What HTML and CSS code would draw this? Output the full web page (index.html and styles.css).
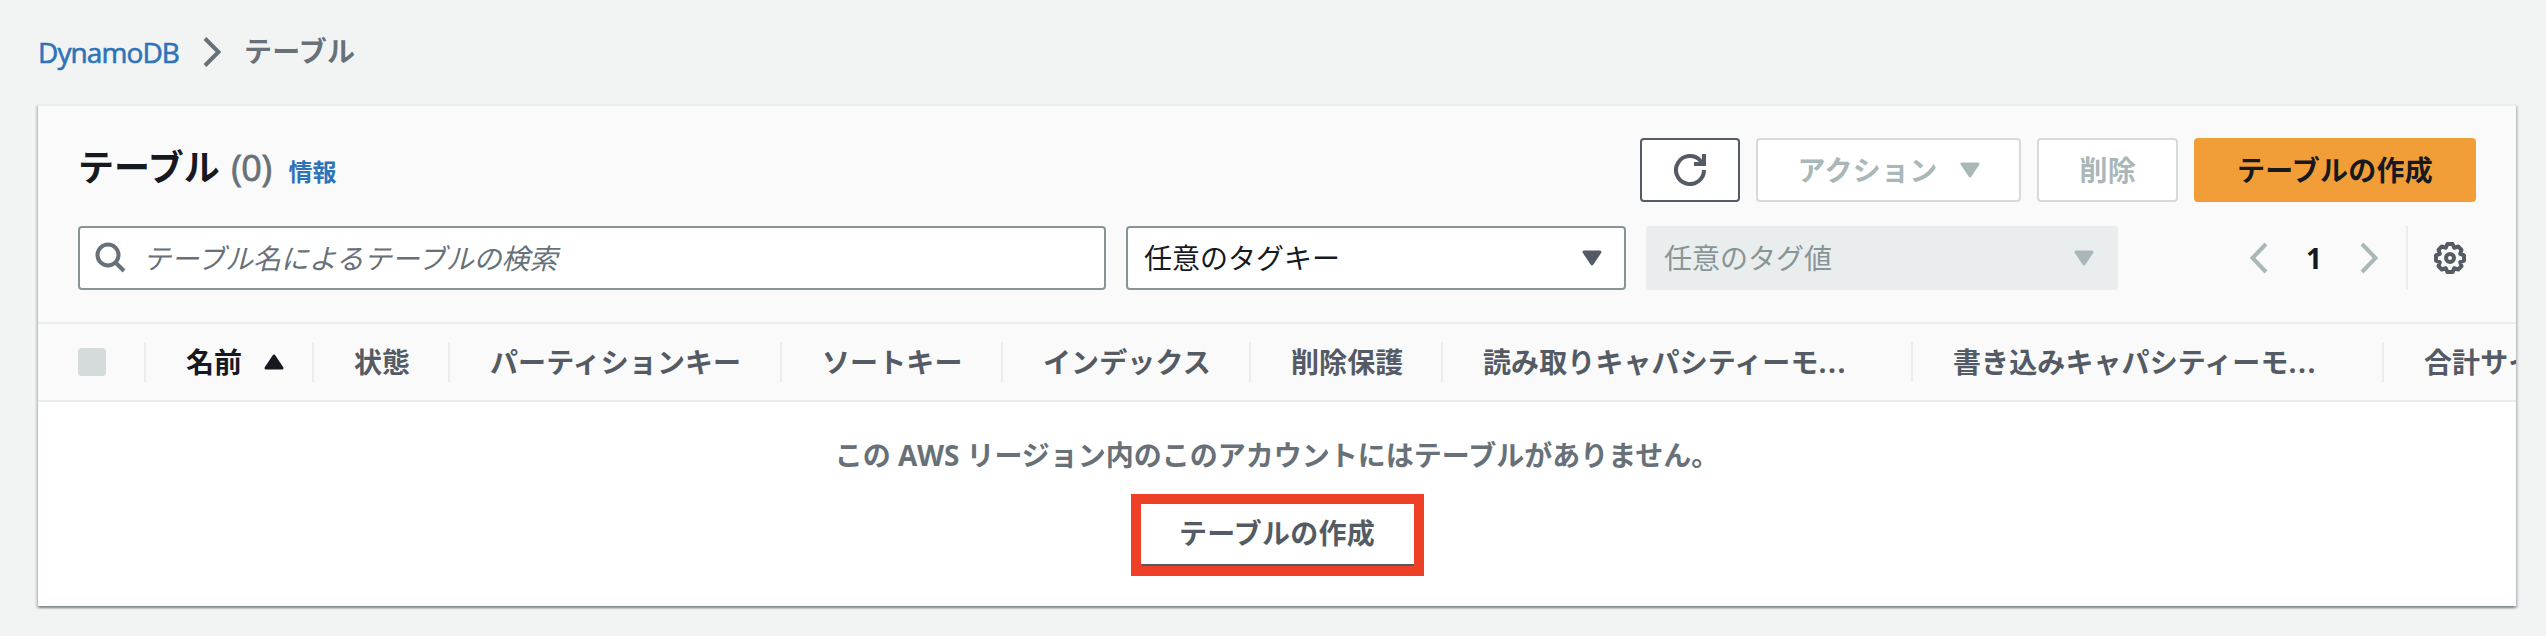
FILE: index.html
```html
<!DOCTYPE html>
<html lang="ja">
<head>
<meta charset="utf-8">
<title>DynamoDB テーブル</title>
<link rel="stylesheet" href="styles.css">
</head>
<body>
<nav class="breadcrumb">
  <a class="link latin">DynamoDB</a>
  <svg class="crumb-sep" width="20" height="32" viewBox="0 0 20 32"><path d="M3 2.5 16.5 16 3 29.5" fill="none" stroke="#687078" stroke-width="4"/></svg>
  <span class="crumb-current">テーブル</span>
</nav>
<main class="panel">
  <header class="panel-head">
    <div class="title-row">
      <h1 class="title">テーブル <span class="count">(0)</span></h1>
      <a class="link info">情報</a>
      <div class="actions">
        <button class="btn btn-icon" aria-label="更新"><svg width="32" height="32" viewBox="0 0 32 32" fill="none" stroke="#545b64" stroke-width="4"><path d="M30 16A14 14 0 1 1 26.500 6.800L29 10"/><path d="M30 0v10H20"/></svg></button>
        <button class="btn btn-disabled btn-menu">アクション<svg width="20" height="16" viewBox="0 0 20 16"><path d="M2 2H18L10 14Z" fill="#aab7b8" stroke="#aab7b8" stroke-width="3" stroke-linejoin="round"/></svg></button>
        <button class="btn btn-disabled">削除</button>
        <button class="btn btn-primary">テーブルの作成</button>
      </div>
    </div>
    <div class="filter-row">
      <div class="field search">
        <svg width="32" height="32" viewBox="0 0 32 32" fill="none" stroke="#687078" stroke-width="4"><circle cx="13" cy="13" r="10.500"/><path d="m20.500 20.500 8.500 8.500"/></svg>
        <span class="placeholder">テーブル名によるテーブルの検索</span>
      </div>
      <div class="field select tag-key">任意のタグキー<svg width="20" height="16" viewBox="0 0 20 16"><path d="M2 2H18L10 14Z" fill="#545b64" stroke="#545b64" stroke-width="3" stroke-linejoin="round"/></svg></div>
      <div class="field select tag-value">任意のタグ値<svg width="20" height="16" viewBox="0 0 20 16"><path d="M2 2H18L10 14Z" fill="#aab7b8" stroke="#aab7b8" stroke-width="3" stroke-linejoin="round"/></svg></div>
      <div class="pager">
        <svg width="20" height="32" viewBox="0 0 20 32"><path d="M17 2 3.500 16 17 30" fill="none" stroke="#aab7b8" stroke-width="4"/></svg>
        <span class="page">1</span>
        <svg width="20" height="32" viewBox="0 0 20 32"><path d="M3 2 16.500 16 3 30" fill="none" stroke="#aab7b8" stroke-width="4"/></svg>
      </div>
      <div class="settings"><svg width="32" height="32" viewBox="0 0 32 32" fill="none" stroke="#545b64" stroke-width="4" stroke-linejoin="round"><circle cx="16" cy="16" r="4"/><path d="M13.400 2h5.200L20.200 5.800 24.200 4.500 27.500 7.800 26.200 11.800 30 13.400v5.200L26.200 20.200 27.500 24.200 24.200 27.500 20.200 26.200 18.600 30h-5.200L11.800 26.200 7.800 27.500 4.500 24.200 5.800 20.200 2 18.600v-5.200L5.800 11.800 4.500 7.800 7.800 4.500 11.800 5.800Z"/></svg></div>
    </div>
  </header>
  <div class="columns">
    <div class="col col-check"><span class="checkbox"></span></div>
    <div class="col sorted">名前<svg width="20" height="16" viewBox="0 0 20 16"><path d="M2 14H18L10 2Z" fill="#16191f" stroke="#16191f" stroke-width="3" stroke-linejoin="round"/></svg></div>
    <div class="col">状態</div>
    <div class="col">パーティションキー</div>
    <div class="col">ソートキー</div>
    <div class="col">インデックス</div>
    <div class="col">削除保護</div>
    <div class="col">読み取りキャパシティーモ<span class="dots">...</span></div>
    <div class="col">書き込みキャパシティーモ<span class="dots">...</span></div>
    <div class="col">合計サイズ</div>
  </div>
  <section class="empty">
    <p class="empty-text">この <span class="aws">AWS</span> リージョン内のこのアカウントにはテーブルがありません。</p>
    <div class="highlight"><button class="create">テーブルの作成</button></div>
  </section>
</main>
</body>
</html>
```
FILE: styles.css
```css
* { box-sizing: border-box; }
body {
  margin: 0;
  height: 636px;
  overflow: hidden;
  background: #f2f4f4;
  color: #16191f;
  font: 28px/40px "Open Sans", "Noto Sans CJK JP", sans-serif;
}
svg { display: block; flex: none; }
button { font: inherit; margin: 0; }
.link { color: #2e73b8; }

.breadcrumb {
  display: flex;
  align-items: center;
  height: 104px;
  padding-left: 38px;
}
.latin { width: 164px; letter-spacing: -.9px; -webkit-text-stroke: .6px #2e73b8; }
.crumb-current { margin: 0 0 2px 22px; color: #687078; font-weight: 700; letter-spacing: .2px; }

.panel {
  width: 2478px;
  height: 502px;
  margin: 0 0 0 38px;
  border-top: 2px solid #eaeded;
  background: #fff;
  box-shadow: 0 2px 2px rgba(0, 28, 36, .3), 2px 2px 2px rgba(0, 28, 36, .15), -2px 2px 2px rgba(0, 28, 36, .15);
}
.panel-head {
  height: 218px;
  padding: 32px 40px 0;
  background: #fafafa;
  border-bottom: 2px solid #eaeded;
}
.title-row { display: flex; align-items: center; height: 64px; }
.title { margin: -4px 0 0; font-size: 36px; line-height: 44px; white-space: nowrap; }
.count { color: #687078; font-weight: 400; letter-spacing: -.5px; margin-left: 2px; -webkit-text-stroke: .8px #687078; }
.info { margin: 3px 0 0 17px; font-size: 24px; font-weight: 700; }
.actions { display: flex; gap: 16px; margin-left: auto; }
.btn {
  display: flex;
  align-items: center;
  justify-content: center;
  height: 64px;
  padding: 0 40px;
  border: 2px solid #545b64;
  border-radius: 4px;
  background: #fff;
  font-weight: 700;
  letter-spacing: .25px;
  white-space: nowrap;
}
.btn-icon { width: 100px; padding: 0; }
.btn-disabled { color: #aab7b8; border-color: #d5dbdb; }
.btn-menu { width: 265px; gap: 23px; }
.btn-primary { width: 282px; background: #f19e39; border-color: #f19e39; color: #16191f; }

.filter-row { display: flex; align-items: center; height: 64px; margin-top: 24px; }
.field {
  display: flex;
  align-items: center;
  height: 64px;
  border: 2px solid #879596;
  border-radius: 4px;
  background: #fff;
  white-space: nowrap;
}
.search { width: 1028px; padding-left: 15px; gap: 16px; }
.placeholder { color: #687078; font-style: italic; letter-spacing: -.1px; }
.select { justify-content: space-between; padding: 0 22px 0 16px; }
.tag-key { width: 500px; margin-left: 20px; }
.tag-value { width: 472px; margin-left: 20px; background: #eaeded; border-color: #eaeded; color: #879596; }
.pager { display: flex; align-items: center; margin-left: auto; }
.page { width: 90px; text-align: center; font-weight: 700; }
.settings {
  display: flex;
  align-items: center;
  height: 64px;
  margin-left: 27px;
  padding: 0 10px 0 26px;
  border-left: 2px solid #eaeded;
}

.columns {
  display: grid;
  grid-template-columns: 108px 168px 136px 332px 221px 248px 192px 470px 471px 132px;
  align-items: center;
  height: 78px;
  overflow: hidden;
  background: #fafafa;
  border-bottom: 2px solid #eaeded;
  color: #545b64;
  font-weight: 700;
  white-space: nowrap;
}
.col {
  display: flex;
  align-items: center;
  height: 40px;
  padding-left: 40px;
  border-right: 2px solid #eaeded;
  line-height: 38px;
  letter-spacing: .1px;
}
.col:last-child { border-right: 0; overflow: hidden; }
.dots { letter-spacing: 1.5px; }
.sorted { gap: 22px; color: #16191f; }
.checkbox { width: 28px; height: 28px; border-radius: 4px; background: #d5dbdb; }

.empty {
  display: flex;
  flex-direction: column;
  align-items: center;
  padding-top: 33px;
  font-weight: 700;
}
.empty-text { margin: 0; color: #687078; white-space: nowrap; }
.aws { letter-spacing: -.2px; }
.highlight {
  width: 293px;
  height: 82px;
  margin-top: 19px;
  border: 10px solid #ed4026;
}
.create {
  display: block;
  width: 100%;
  height: 62px;
  padding: 0 0 2px;
  border: 0;
  border-bottom: 2px solid #545b64;
  background: #fff;
  color: #545b64;
  font-weight: 700;
  letter-spacing: .25px;
}
```
